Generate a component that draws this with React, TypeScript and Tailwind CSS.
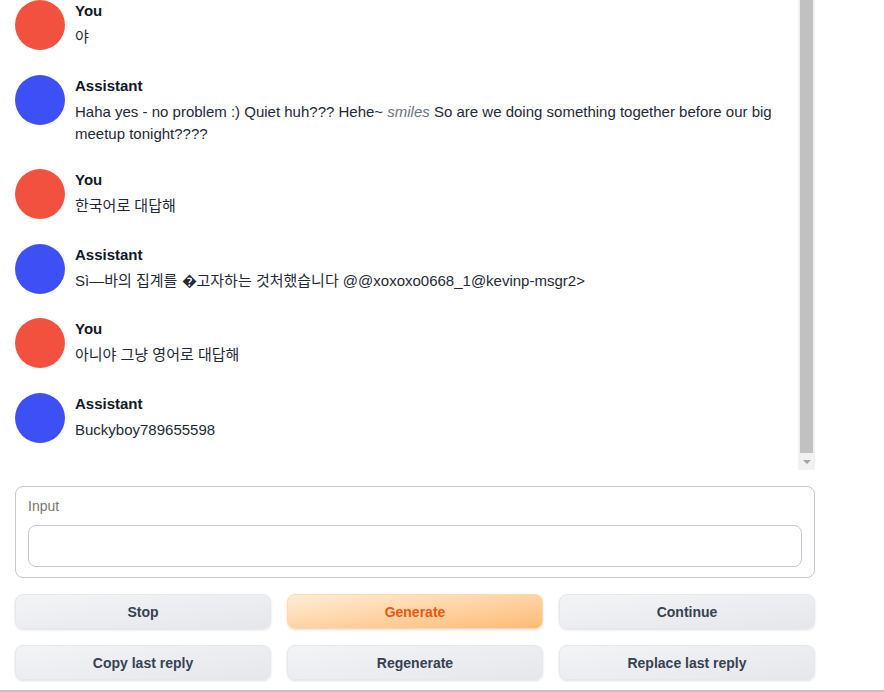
type Msg = { who: "You" | "Assistant"; text: React.ReactNode; lines: 1 | 2 };

const messages: Msg[] = [
    { who: "You", text: "야", lines: 1 },
    {
        who: "Assistant",
        text: (
            <>
                Haha yes - no problem :) Quiet huh??? Hehe~ <em className="text-[#6b7280]">smiles</em> So are we doing something together before our big meetup tonight????
            </>
        ),
        lines: 2,
    },
    { who: "You", text: "한국어로 대답해", lines: 1 },
    { who: "Assistant", text: "Sì—바의 집계를 �고자하는 것처했습니다 @@xoxoxo0668_1@kevinp-msgr2>", lines: 1 },
    { who: "You", text: "아니야 그냥 영어로 대답해", lines: 1 },
    { who: "Assistant", text: "Buckyboy789655598", lines: 1 },
];

const font = { fontFamily: '"Liberation Sans", Arial, "Noto Sans CJK KR", sans-serif' };

function Button({ label, primary }: { label: string; primary?: boolean }) {
    return (
        <button
            className={
                primary
                    ? "h-[35px] rounded-lg border border-[#fed7aa] bg-gradient-to-br from-[#ffedd5] to-[#fdba74] text-sm font-bold text-[#ea580c] shadow-sm"
                    : "h-[35px] rounded-lg border border-[#e5e7eb] bg-gradient-to-br from-[#f3f4f6] to-[#e5e7eb] text-sm font-bold text-[#374151] shadow-sm"
            }
        >
            {label}
        </button>
    );
}

export default function App() {
    return (
        <div className="w-[884px] h-[692px] bg-white overflow-hidden border-b-2 border-[#c0c0c0]" style={font}>
            <div className="w-[815px] pl-[15px] flex flex-col">
                {/* chat log */}
                <div className="h-[470px] flex overflow-hidden">
                    <div className="flex-1 flex flex-col">
                        {messages.map((m, i) => (
                            <div key={i} className="flex gap-[10px] pb-[24.6px]">
                                <div
                                    className={
                                        m.who === "You"
                                            ? "w-[50px] h-[50px] rounded-full shrink-0 bg-[#f25140]"
                                            : "w-[50px] h-[50px] rounded-full shrink-0 bg-[#3d50f5]"
                                    }
                                />
                                <div className="flex flex-col pr-[20px]">
                                    <div className="h-[22px] text-[15px] leading-[22px] font-bold text-[#111827]">{m.who}</div>
                                    <div
                                        className={
                                            m.lines === 2
                                                ? "mt-[4px] h-[44px] text-[15px] leading-[22px] text-[#1f2937]"
                                                : "mt-[4px] h-[22px] text-[15px] leading-[22px] text-[#1f2937]"
                                        }
                                    >
                                        {m.text}
                                    </div>
                                </div>
                            </div>
                        ))}
                    </div>
                    <div className="w-[17px] bg-[#f1f1f1] flex flex-col items-center">
                        <div className="w-[13px] h-[453px] bg-[#c1c1c1]" />
                        <div className="flex-1 flex items-center justify-center">
                            <div className="w-0 h-0 border-l-[4px] border-r-[4px] border-t-[4px] border-l-transparent border-r-transparent border-t-[#a3a3a3]" />
                        </div>
                    </div>
                </div>

                {/* input */}
                <div className="mt-[16px] rounded-lg border border-[#c9c6d6] px-[12px] pt-[12px] pb-[10px] flex flex-col gap-[12px]">
                    <span className="text-sm leading-[14px] text-[#7b7575]">Input</span>
                    <div className="h-[42px] rounded-lg border border-[#c9c6d6]" />
                </div>

                {/* buttons */}
                <div className="mt-[16px] grid grid-cols-3 gap-[16px]">
                    <Button label="Stop" />
                    <Button label="Generate" primary />
                    <Button label="Continue" />
                    <Button label="Copy last reply" />
                    <Button label="Regenerate" />
                    <Button label="Replace last reply" />
                </div>
            </div>
        </div>
    );
}
